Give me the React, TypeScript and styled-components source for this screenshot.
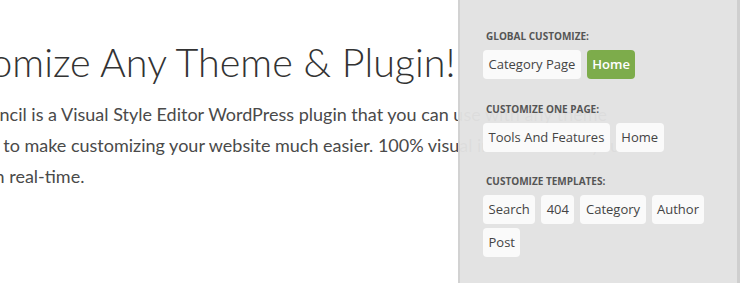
import React from "react";
import styled, { createGlobalStyle } from "styled-components";

const Global = createGlobalStyle`
  html, body { margin: 0; padding: 0; background: #fff; }
  * { box-sizing: border-box; }
`;

const Page = styled.div`
  position: relative;
  width: 750px;
  height: 283px;
  overflow: hidden;
  background: #fff;
`;

const Content = styled.div`
  margin-left: -76px;
  padding-top: 40px;
  font-family: Lato, "Open Sans", sans-serif;
`;

const Title = styled.h1`
  margin: 0 0 0 -12px;
  font-size: 39.5px;
  line-height: 44px;
  font-weight: 300;
  color: #333;
  white-space: nowrap;
`;

const Intro = styled.p`
  margin: 15px 0 0;
  font-size: 18px;
  line-height: 31px;
  color: #4a4a4a;
  white-space: nowrap;
`;

const Panel = styled.aside`
  position: absolute;
  top: 0;
  bottom: 0;
  left: 458px;
  width: 282px;
  background: rgba(226, 226, 226, 0.965);
  border-left: 2px solid #d2d2d2;
  border-right: 3px solid #cfcfcf;
  padding: 29px 10px 0 23px;
  display: flex;
  flex-direction: column;
  gap: 22.5px;
  font-family: "Open Sans", sans-serif;
`;

const Section = styled.div`
  display: flex;
  flex-direction: column;
  gap: 7px;
`;

const Label = styled.div`
  padding-left: 3px;
  font-size: 10px;
  line-height: 14px;
  font-weight: 700;
  color: #555;
  text-transform: uppercase;
`;

const Buttons = styled.div`
  display: flex;
  flex-wrap: wrap;
  gap: 4px 6px;
`;

const Tag = styled.span<{ $active?: boolean }>`
  display: inline-block;
  height: 29px;
  line-height: 29px;
  padding: 0 5.5px;
  border-radius: 4px;
  font-size: 13px;
  font-weight: ${(p) => (p.$active ? 600 : 400)};
  background: ${(p) => (p.$active ? "#7dac4b" : "#fafafa")};
  color: ${(p) => (p.$active ? "#fff" : "#444")};
  white-space: nowrap;
`;

const sections: { title: string; items: { name: string; active?: boolean }[] }[] = [
  { title: "Global Customize:", items: [{ name: "Category Page" }, { name: "Home", active: true }] },
  { title: "Customize One Page:", items: [{ name: "Tools And Features" }, { name: "Home" }] },
  {
    title: "Customize Templates:",
    items: [{ name: "Search" }, { name: "404" }, { name: "Category" }, { name: "Author" }, { name: "Post" }],
  },
];

export default function App() {
  return (
    <Page>
      <Global />
      <Content>
        <Title>Customize Any Theme &amp; Plugin!</Title>
        <Intro>
          Yellow Pencil is a Visual Style Editor WordPress plugin that you can use with any theme
          <br />
          produced to make customizing your website much easier. 100% visual interface. Edit your
          <br />
          website in real-time.
        </Intro>
      </Content>
      <Panel>
        {sections.map((s) => (
          <Section key={s.title}>
            <Label>{s.title}</Label>
            <Buttons>
              {s.items.map((it) => (
                <Tag key={it.name} $active={it.active}>
                  {it.name}
                </Tag>
              ))}
            </Buttons>
          </Section>
        ))}
      </Panel>
    </Page>
  );
}
